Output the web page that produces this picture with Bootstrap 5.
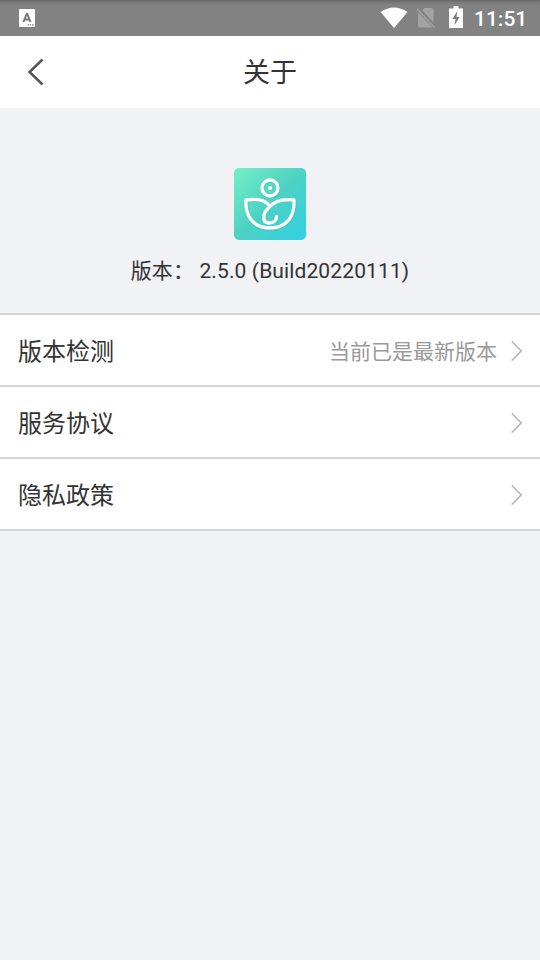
<!DOCTYPE html>
<html lang="zh-CN">
<head>
<meta charset="utf-8">
<meta name="viewport" content="width=device-width, initial-scale=1">
<title>关于</title>
<link rel="stylesheet" href="https://cdn.jsdelivr.net/npm/bootstrap@5.3.0/dist/css/bootstrap.min.css">
<style>
body{font-family:Roboto,"Noto Sans CJK SC",sans-serif;background:#f0f2f6;color:#333;min-height:960px}
svg{display:block;flex:none}
.statusbar{height:36px;background:linear-gradient(#686868,#7c7c7c 3px,#828282 5px,#828282);padding:0 12px 0 18px}
.clock{font-size:21px;font-weight:500;line-height:34px;padding-top:2px;width:54px;margin-left:11px;white-space:nowrap}
.battery{margin:0 0 2px 13px}
.titlebar{height:72px;padding:0 24px}
.titlebar h1{font-size:27px;line-height:70px;padding:2px 24px 0 0}
.about{height:205px;padding-top:60px}
.version{font-size:21px;line-height:30px;margin-top:16px;white-space:pre;letter-spacing:.12px}
.menu .list-group-item{height:72px;padding:2px 18px 0;border:0 solid #d5d6d8;border-bottom-width:2px;color:#333;font-size:24px;line-height:66px}
.menu .list-group-item span{padding-top:2px}
.menu{border-top:2px solid #d5d6d8}
.menu .state{font-size:21px;color:#999;margin-right:14px;padding-top:3px}
</style>
</head>
<body>
<header>
  <div class="statusbar d-flex align-items-center text-white">
    <svg width="18" height="18" viewBox="0 0 18 18"><rect x="1" width="16" height="18" rx="1" fill="#fff"/><path d="M5.500 13 8.700 5h.6l3.200 8M6.500 10.500h5" fill="none" stroke="#777" stroke-width="2"/><path d="M9.500 15.800h1.300m1 0h1.300m1 0h1.300" stroke="#777" stroke-width="1.200"/></svg>
    <svg class="ms-auto" width="28" height="22" viewBox="0 0 28 22"><path d="M.5 5Q14-4 27.500 5L14 21Z" fill="#fff"/></svg>
    <svg class="ms-2" width="20" height="22" viewBox="0 0 20 22"><path d="M6.200 3.200 8.500 1H15.500Q17.500 1 17.500 3V15.500ZM2 5.500 16.500 20.500H4Q2 20.500 2 18.500Z" fill="#a3a3a3"/><path d="m1 2 17.500 18.500" stroke="#a3a3a3" stroke-width="1.600"/></svg>
    <svg class="battery" width="14" height="22" viewBox="0 0 14 22"><path d="M4.500 0h5v2.500H14V22H0V2.500h4.500Z" fill="#fff"/><path d="M8.300 5 3.500 13h3l-.8 6L10.500 11h-3Z" fill="#777"/></svg>
    <span class="clock">11:51</span>
  </div>
  <nav class="titlebar bg-white d-flex align-items-center">
    <svg width="24" height="30" viewBox="0 0 24 30"><path d="M18.500 2.500 5.500 15 18.500 27.500" fill="none" stroke="#555" stroke-width="2.500"/></svg>
    <h1 class="flex-grow-1 text-center fw-normal m-0">关于</h1>
  </nav>
</header>
<main>
  <section class="about d-flex flex-column align-items-center">
    <svg width="72" height="72" viewBox="0 0 72 72">
      <defs><linearGradient id="mint" x1="0" y1="0" x2="1" y2="1"><stop stop-color="#75eec4"/><stop offset=".5" stop-color="#4dd2c3"/><stop offset="1" stop-color="#2fd0e4"/></linearGradient></defs>
      <rect width="72" height="72" rx="5" fill="url(#mint)"/>
      <g fill="none" stroke="#2ca9a9" stroke-opacity=".35" stroke-width="3.500" transform="translate(.5 1)"><circle cx="36" cy="20" r="8"/><path d="M12 32C11 49 20 60 36 60S61 49 60 32"/></g>
      <g fill="none" stroke="#fff" stroke-width="3.300" stroke-linecap="round" stroke-linejoin="round"><circle cx="36" cy="20" r="8"/><path d="M35 37C30 31.500 22 30.500 12 32 11 49 20 60 36 60S61 49 60 32C48 30.500 40 33.500 35 39.500 28 45.500 28 55 35 55 40 55 42.500 52 42.500 48.500"/></g>
      <circle cx="36" cy="20" r="2.100" fill="#fff"/>
    </svg>
    <div class="version">版本： 2.5.0 (Build20220111)</div>
  </section>
  <div class="menu list-group rounded-0">
    <a class="list-group-item d-flex align-items-center rounded-0" href="#"><span>版本检测</span><span class="state ms-auto">当前已是最新版本</span><svg width="11" height="22" viewBox="0 0 11 22"><path d="m.8 1.500 9.500 9.500L.8 20.500" fill="none" stroke="#b5b5b5" stroke-width="1.600"/></svg></a>
    <a class="list-group-item d-flex align-items-center" href="#"><span>服务协议</span><svg class="ms-auto" width="11" height="22" viewBox="0 0 11 22"><path d="m.8 1.500 9.500 9.500L.8 20.500" fill="none" stroke="#b5b5b5" stroke-width="1.600"/></svg></a>
    <a class="list-group-item d-flex align-items-center rounded-0" href="#"><span>隐私政策</span><svg class="ms-auto" width="11" height="22" viewBox="0 0 11 22"><path d="m.8 1.500 9.500 9.500L.8 20.500" fill="none" stroke="#b5b5b5" stroke-width="1.600"/></svg></a>
  </div>
</main>
<script src="https://cdn.jsdelivr.net/npm/bootstrap@5.3.0/dist/js/bootstrap.bundle.min.js"></script>
</body>
</html>
